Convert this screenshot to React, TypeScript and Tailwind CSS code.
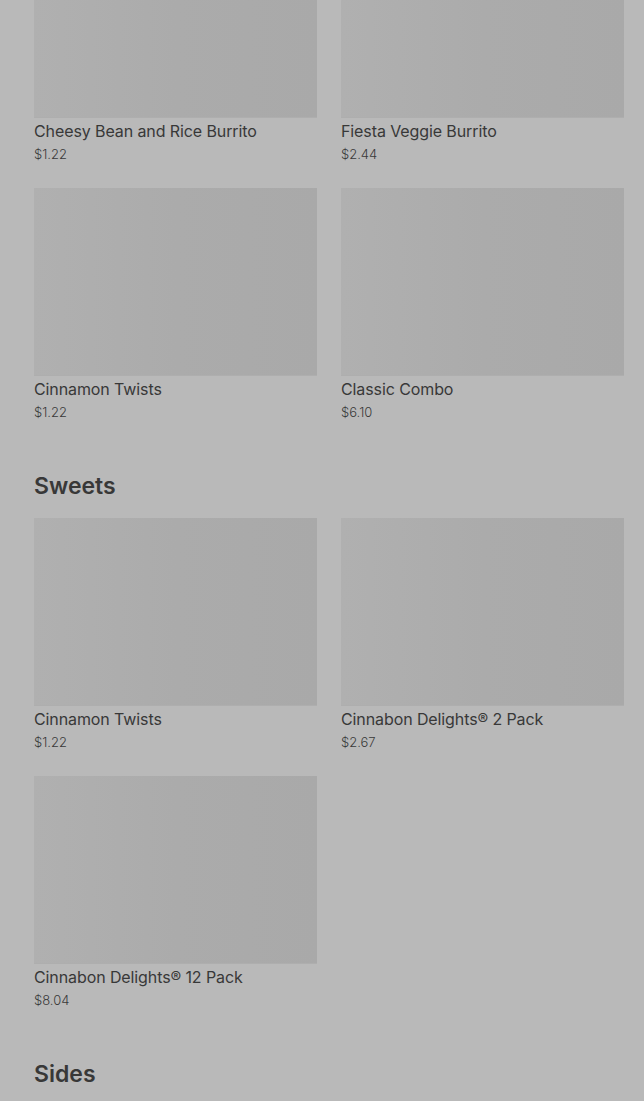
type Item = {
    name: string;
    price: string;
}

type Section = {
    title?: string;
    items: Item[];
}

const sections: Section[] = [
    {
        items: [
            { name: "Cheesy Bean and Rice Burrito", price: "$1.22" },
            { name: "Fiesta Veggie Burrito", price: "$2.44" },
            { name: "Cinnamon Twists", price: "$1.22" },
            { name: "Classic Combo", price: "$6.10" },
        ],
    },
    {
        title: "Sweets",
        items: [
            { name: "Cinnamon Twists", price: "$1.22" },
            { name: "Cinnabon Delights® 2 Pack", price: "$2.67" },
            { name: "Cinnabon Delights® 12 Pack", price: "$8.04" },
        ],
    },
    {
        title: "Sides",
        items: [],
    },
];

function MenuCard({ item }: { item: Item }) {
    return (
        <div className="flex flex-col">
            <div className="h-[188px] w-full bg-gradient-to-r from-[#b0b0b0] via-[#ababab] to-[#a9a9a9] border-b border-[#aeaeae]" />
            <div className="pt-[1px]">
                <div className="text-[16px] leading-6 font-normal text-[#383838] tracking-[-0.1px]">{item.name}</div>
                <div className="text-[13px] leading-5 pt-[1px] font-light text-[#3a3a3a]">{item.price}</div>
            </div>
        </div>
    );
}

function App() {
    return (
        <div className="h-[1101px] overflow-hidden bg-[#b9b9b9] font-['Inter',_'Liberation_Sans',_sans-serif]">
            <div className="mt-[-70px] pl-[34px] pr-[20px]">
                {sections.map((section, index) => (
                    <div key={index} className={index > 0 ? "mt-[48px]" : ""}>
                        {section.title && (
                            <h2 className="text-[23px] leading-8 font-semibold text-[#383838] mb-[16px]">{section.title}</h2>
                        )}
                        <div className="grid grid-cols-2 gap-x-6 gap-y-6">
                            {section.items.map((item, i) => (
                                <MenuCard key={i} item={item} />
                            ))}
                        </div>
                    </div>
                ))}
            </div>
        </div>
    );
}

export default App
